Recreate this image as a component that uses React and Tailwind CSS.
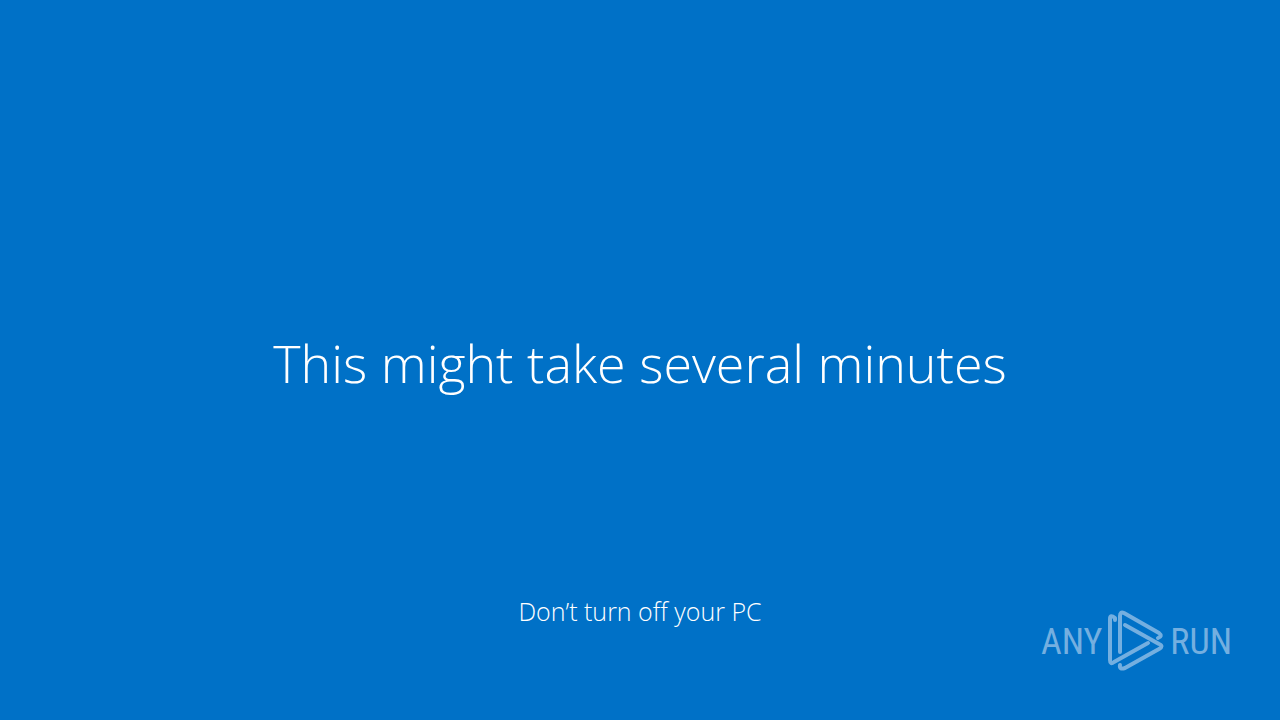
import React from 'react';

const PlayMark = () => (
  <svg
    className="h-16 w-[60px]"
    viewBox="0 0 60 64"
    fill="none"
    stroke="currentColor"
    strokeWidth="4"
    strokeLinecap="round"
    strokeLinejoin="round"
    aria-hidden="true"
  >
    <path d="M9 12 V10 Q4 6 4 11 V52 Q4 57 8 54 L42 35" />
    <path d="M14 44 V8 Q14 3 18 5 L53 25 Q57 28 52 30" />
    <path d="M19 17 L53 36 Q58 38 53 41 L19 60 Q13 62 14 57" />
  </svg>
);

const Watermark = () => (
  <div className="absolute right-12 bottom-12 flex items-center gap-1 font-['Roboto_Condensed',sans-serif] text-4xl font-normal text-[#74afe0]">
    <span className="pt-1">ANY</span>
    <PlayMark />
    <span className="pt-1">RUN</span>
  </div>
);

const App = () => {
  return (
    <main className="relative grid min-h-screen grid-rows-[1fr_auto_1fr] bg-[#0071c7] text-center font-['Open_Sans',sans-serif] font-light text-white">
      <h1 className="row-start-2 pt-1.5 text-[52px] leading-20">This might take several minutes</h1>
      <p className="row-start-3 self-end pb-[91px] text-[25px] leading-9">Don’t turn off your PC</p>
      <Watermark />
    </main>
  );
};

export default App;
